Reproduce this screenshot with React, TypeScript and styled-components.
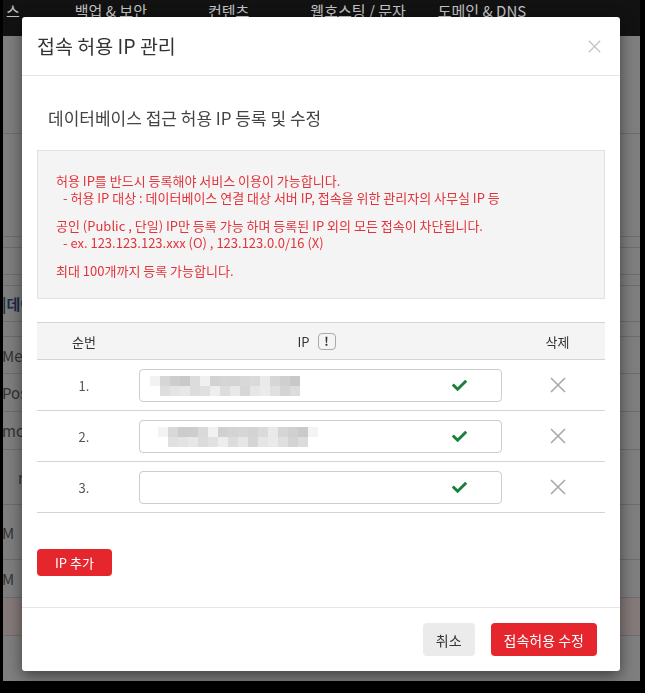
import styled, { createGlobalStyle } from 'styled-components'
import { FaCheck } from 'react-icons/fa'

const GlobalStyle = createGlobalStyle`
  html, body {
    margin: 0;
    padding: 0;
    background: #000;
    height: 693px;
    overflow: hidden;
    font-family: "Noto Sans CJK KR", "Noto Sans", sans-serif;
  }
  * { box-sizing: border-box; }
`

const navItems = [
  { label: '스', gap: 3 },
  { label: '백업 & 보안', gap: 55 },
  { label: '컨텐츠', gap: 61 },
  { label: '웹호스팅 / 문자', gap: 61 },
  { label: '도메인 & DNS', gap: 32 },
]

const bgRows = [
  { h: 98, left: '' },
  { h: 103, left: '' },
  { h: 11, left: '' },
  { h: 27, left: '' },
  { h: 11, left: '' },
  { h: 36, left: '|데이', blue: true },
  { h: 15, left: '' },
  { h: 37, left: 'Menu' },
  { h: 38, left: 'Post' },
  { h: 38, left: 'mon' },
  { h: 55, left: 'r', indent: 15 },
  { h: 55, left: 'M' },
  { h: 38, left: 'M' },
  { h: 38, left: '', pink: true },
]

// mosaic blur over stored ip values
const mosaics = [
  {
    top: ['#f2f2f2', '#d6d6d6', '#cdcdcd', '#c9c9c9', '#dcdcdc', '#f0f0f0', '#d2d2d2', '#d5d5d5', '#d4d4d4', '#d8d8d8', '#dadada', '#eaeaea', '#d6d6d6', '#cfcfcf', '#c8c8c8'],
    bottom: ['#dedede', '#e4e4e4', '#e8e8e8', '#dcdcdc', '#e0e0e0', '#eeeeee', '#dddddd', '#e8e8e8', '#d6d6d6', '#e6e6e6', '#ebebeb', '#e0e0e0', '#d4d4d4', '#dcdcdc'],
    offset: 11,
  },
  {
    top: ['#f3f3f3', '#d8d8d8', '#cccccc', '#cdcdcd', '#dadada', '#f1f1f1', '#d0d0d0', '#d4d4d4', '#d6d6d6', '#d3d3d3', '#dadada', '#e9e9e9', '#d5d5d5', '#d0d0d0', '#cacaca', '#f4f4f4'],
    bottom: ['#e0e0e0', '#e3e3e3', '#e7e7e7', '#dbdbdb', '#e1e1e1', '#ededed', '#dcdcdc', '#e6e6e6', '#d5d5d5', '#e5e5e5', '#eaeaea', '#dfdfdf', '#d3d3d3', '#dbdbdb'],
    offset: 19,
  },
  null,
]

const Mosaic = ({ top, bottom }: { top: string[]; bottom: string[] }) => (
  <svg width={top.length * 10} height={20} style={{ display: 'block' }}>
    {top.map((c, i) => (
      <rect key={'t' + i} x={i * 10} y={0} width={10} height={10} fill={c} />
    ))}
    {bottom.map((c, i) => (
      <rect key={'b' + i} x={10 + i * 10} y={10} width={10} height={10} fill={c} />
    ))}
  </svg>
)

const Cross = ({ size, color, width }: { size: number; color: string; width: number }) => (
  <svg width={size} height={size} viewBox="0 0 16 16">
    <path d="M1 1 L15 15 M15 1 L1 15" stroke={color} strokeWidth={width} fill="none" />
  </svg>
)

const App = () => {
  return (
    <>
      <GlobalStyle />
      <Page>
        <Nav>
          {navItems.map((n) => (
            <NavItem key={n.label} $gap={n.gap}>{n.label}</NavItem>
          ))}
        </Nav>
        {bgRows.map((r, i) => (
          <BgRow key={i} $h={r.h} $pink={r.pink}>
            <BgText $blue={r.blue} $indent={r.indent}>{r.left}</BgText>
          </BgRow>
        ))}
      </Page>

      <Modal>
        <Header>
          <Title>접속 허용 IP 관리</Title>
          <CloseBtn>
            <Cross size={13} color="#c4c4c4" width={1.6} />
          </CloseBtn>
        </Header>

        <Body>
          <SubTitle>데이터베이스 접근 허용 IP 등록 및 수정</SubTitle>

          <Notice>
            <p>
              <Line>허용 IP를 반드시 등록해야 서비스 이용이 가능합니다.</Line>
              <Line $indent>- 허용 IP 대상 : 데이터베이스 연결 대상 서버 IP, 접속을 위한 관리자의 사무실 IP 등</Line>
            </p>
            <p>
              <Line>공인 (Public , 단일) IP만 등록 가능 하며 등록된 IP 외의 모든 접속이 차단됩니다.</Line>
              <Line $indent>- ex. 123.123.123.xxx (O) , 123.123.0.0/16 (X)</Line>
            </p>
            <p>
              <Line>최대 100개까지 등록 가능합니다.</Line>
            </p>
          </Notice>

          <Table>
            <HeadRow>
              <Cell $w={94}>순번</Cell>
              <Cell $w={379} $shift={4}>
                IP <InfoMark>!</InfoMark>
              </Cell>
              <Cell $w={95}>삭제</Cell>
            </HeadRow>
            {mosaics.map((m, i) => (
              <Row key={i}>
                <Cell $w={94} $muted>{i + 1}.</Cell>
                <Cell $w={379}>
                  <Field>
                    <FieldValue $offset={m ? m.offset : 0}>
                      {m && <Mosaic top={m.top} bottom={m.bottom} />}
                    </FieldValue>
                    <FaCheck size={15} color="#1b7f3e" />
                  </Field>
                </Cell>
                <Cell $w={95}>
                  <Cross size={16} color="#a9a9a9" width={1.6} />
                </Cell>
              </Row>
            ))}
          </Table>

          <Button $tone="red" $h={27} $size={13}>IP 추가</Button>
        </Body>

        <Footer>
          <Button $tone="gray" $h={33} $size={14}>취소</Button>
          <Button $tone="red" $h={33} $size={14}>접속허용 수정</Button>
        </Footer>
      </Modal>
    </>
  )
}

export default App

const Page = styled.div`
  margin-left: 3px;
  width: 637px;
  height: 681px;
  background: #7f7f7f;
  overflow: hidden;
`

const Nav = styled.div`
  height: 36px;
  background: #121212;
  display: flex;
`

const NavItem = styled.div<{ $gap: number }>`
  margin-left: ${(p) => p.$gap}px;
  color: #c2c2c2;
  font-size: 15px;
  line-height: 22px;
  white-space: nowrap;
`

const BgRow = styled.div<{ $h: number; $pink?: boolean }>`
  height: ${(p) => p.$h}px;
  display: flex;
  align-items: center;
  border-bottom: 1px solid #6d6d6d;
  background: ${(p) => (p.$pink ? '#857a7a' : 'transparent')};
`

const BgText = styled.span<{ $blue?: boolean; $indent?: number }>`
  margin-left: ${(p) => (p.$indent ?? -1)}px;
  font-size: 15px;
  color: ${(p) => (p.$blue ? '#1d2c44' : '#333')};
  font-weight: ${(p) => (p.$blue ? 700 : 400)};
`

const Modal = styled.div`
  position: fixed;
  top: 17px;
  left: 22px;
  width: 598px;
  background: #fff;
  border-radius: 3px;
  box-shadow: 0 5px 15px rgba(0, 0, 0, 0.5);
`

const Header = styled.div`
  height: 59px;
  padding: 0 19px 0 15px;
  display: flex;
  align-items: center;
  justify-content: space-between;
  border-bottom: 1px solid #e5e5e5;
`

const Title = styled.h4`
  margin: 0;
  font-size: 19.5px;
  font-weight: 400;
  color: #333;
  line-height: 28px;
`

const CloseBtn = styled.span`
  display: flex;
  cursor: pointer;
`

const Body = styled.div`
  padding: 31px 15px 31px;
`

const SubTitle = styled.h5`
  margin: 0 0 21px 11px;
  font-size: 17px;
  line-height: 22px;
  font-weight: 400;
  color: #444;
`

const Notice = styled.div`
  background: #f4f4f4;
  border: 1px solid #e1e1e1;
  padding: 21px 18px 19px;

  p {
    margin: 0 0 11px;
  }
  p:last-child {
    margin-bottom: 0;
  }
`

const Line = styled.span<{ $indent?: boolean }>`
  display: block;
  font-size: 13px;
  line-height: 17px;
  color: #e3333a;
  padding-left: ${(p) => (p.$indent ? '7px' : '0')};
  white-space: nowrap;
`

const Table = styled.div`
  margin-top: 23px;
  margin-bottom: 36px;
  border-top: 1px solid #d4d4d4;
`

const HeadRow = styled.div`
  display: flex;
  height: 37px;
  background: #f4f4f4;
  border-bottom: 1px solid #d4d4d4;
  font-size: 13px;
  color: #333;
`

const Row = styled.div`
  display: flex;
  height: 51px;
  border-bottom: 1px solid #d4d4d4;
  font-size: 13px;
`

const Cell = styled.div<{ $w: number; $muted?: boolean; $shift?: number }>`
  flex: 0 0 ${(p) => p.$w}px;
  display: flex;
  align-items: center;
  justify-content: center;
  padding: 0 ${(p) => 8 + (p.$shift ?? 0) * 2}px 0 8px;
  color: ${(p) => (p.$muted ? '#555' : '#333')};
`

const InfoMark = styled.span`
  display: inline-flex;
  align-items: center;
  justify-content: center;
  width: 18px;
  height: 17px;
  margin-left: 8px;
  border: 1.5px solid #aaa;
  border-radius: 4px;
  font-size: 12px;
  font-weight: 700;
  color: #333;
  line-height: 1;
`

const Field = styled.div`
  width: 100%;
  height: 33px;
  border: 1px solid #cdcdcd;
  border-radius: 4px;
  display: flex;
  align-items: center;
  justify-content: space-between;
  padding-right: 34px;
  margin-top: 1px;
`

const FieldValue = styled.div<{ $offset: number }>`
  padding-left: ${(p) => p.$offset - 1}px;
`

const Button = styled.button<{ $tone: 'red' | 'gray'; $h: number; $size: number }>`
  height: ${(p) => p.$h}px;
  padding: 0 ${(p) => (p.$tone === 'red' && p.$h < 30 ? 18 : 13)}px;
  border: none;
  border-radius: 4px;
  font-family: inherit;
  font-size: ${(p) => p.$size}px;
  cursor: pointer;
  background: ${(p) => (p.$tone === 'red' ? '#e5262d' : '#ebebeb')};
  color: ${(p) => (p.$tone === 'red' ? '#fff' : '#333')};
`

const Footer = styled.div`
  display: flex;
  justify-content: flex-end;
  gap: 16px;
  padding: 15px 23px 15px 15px;
  border-top: 1px solid #e5e5e5;
`
